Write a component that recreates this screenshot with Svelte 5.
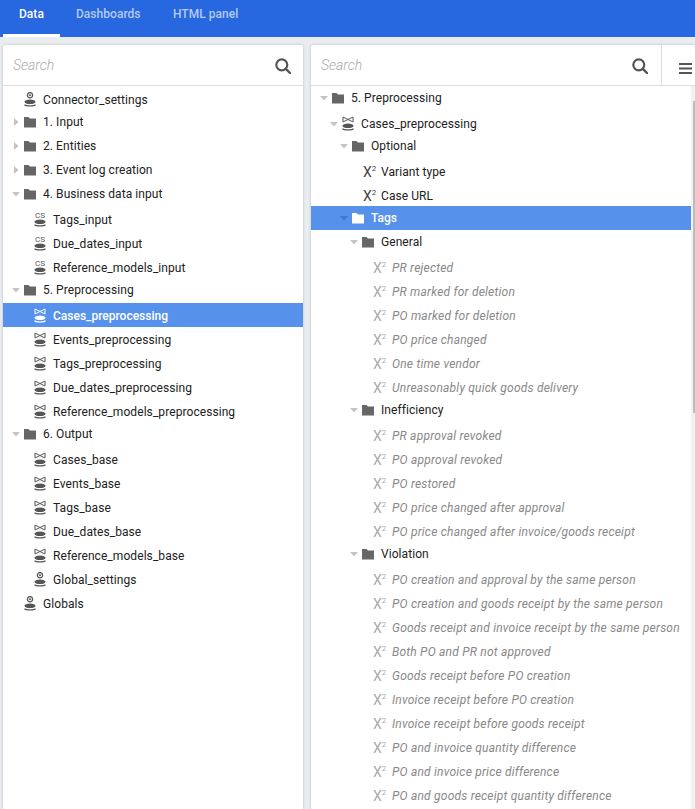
<script>
  const left = [
    { t: 'Connector_settings', k: 'gear', d: 0 },
    { t: '1. Input', k: 'folder', d: 0, a: 'r' },
    { t: '2. Entities', k: 'folder', d: 0, a: 'r' },
    { t: '3. Event log creation', k: 'folder', d: 0, a: 'r' },
    { t: '4. Business data input', k: 'folder', d: 0, a: 'd' },
    { t: 'Tags_input', k: 'cs', d: 1 },
    { t: 'Due_dates_input', k: 'cs', d: 1 },
    { t: 'Reference_models_input', k: 'cs', d: 1 },
    { t: '5. Preprocessing', k: 'folder', d: 0, a: 'd' },
    { t: 'Cases_preprocessing', k: 'join', d: 1, sel: true },
    { t: 'Events_preprocessing', k: 'join', d: 1 },
    { t: 'Tags_preprocessing', k: 'join', d: 1 },
    { t: 'Due_dates_preprocessing', k: 'join', d: 1 },
    { t: 'Reference_models_preprocessing', k: 'join', d: 1 },
    { t: '6. Output', k: 'folder', d: 0, a: 'd' },
    { t: 'Cases_base', k: 'join', d: 1 },
    { t: 'Events_base', k: 'join', d: 1 },
    { t: 'Tags_base', k: 'join', d: 1 },
    { t: 'Due_dates_base', k: 'join', d: 1 },
    { t: 'Reference_models_base', k: 'join', d: 1 },
    { t: 'Global_settings', k: 'gear', d: 1 },
    { t: 'Globals', k: 'gear', d: 0 }
  ];
  const leaf = (t) => ({ t, k: 'x', d: 4, off: true });
  const right = [
    { t: '5. Preprocessing', k: 'folder', d: 0, a: 'd' },
    { t: 'Cases_preprocessing', k: 'join', d: 1, a: 'd' },
    { t: 'Optional', k: 'folder', d: 2, a: 'd' },
    { t: 'Variant type', k: 'x', d: 3 },
    { t: 'Case URL', k: 'x', d: 3 },
    { t: 'Tags', k: 'folder', d: 2, a: 'd', sel: true },
    { t: 'General', k: 'folder', d: 3, a: 'd' },
    ...['PR rejected', 'PR marked for deletion', 'PO marked for deletion', 'PO price changed', 'One time vendor', 'Unreasonably quick goods delivery'].map(leaf),
    { t: 'Inefficiency', k: 'folder', d: 3, a: 'd' },
    ...['PR approval revoked', 'PO approval revoked', 'PO restored', 'PO price changed after approval', 'PO price changed after invoice/goods receipt'].map(leaf),
    { t: 'Violation', k: 'folder', d: 3, a: 'd' },
    ...['PO creation and approval by the same person', 'PO creation and goods receipt by the same person', 'Goods receipt and invoice receipt by the same person', 'Both PO and PR not approved', 'Goods receipt before PO creation', 'Invoice receipt before PO creation', 'Invoice receipt before goods receipt', 'PO and invoice quantity difference', 'PO and invoice price difference', 'PO and goods receipt quantity difference'].map(leaf)
  ];
</script>

{#snippet searchIcon()}
  <svg class="search-icon" viewBox="0 0 16 16" width="16" height="16" aria-hidden="true">
    <circle cx="6.800" cy="6.800" r="5.500" fill="none" stroke="currentColor" stroke-width="2.200" />
    <path d="M10.800 10.800 15 15" stroke="currentColor" stroke-width="2.400" stroke-linecap="round" />
  </svg>
{/snippet}

{#snippet tree(rows)}
  <ul class="tree">
    {#each rows as r}
      <li class="row d{r.d}" class:sel={r.sel} class:off={r.off} class:is-folder={r.k === 'folder'}>
        {#if r.a}
          <svg class="arrow" viewBox="0 0 8 8" width="8" height="8" aria-hidden="true">
            {#if r.a === 'r'}<path d="M2 0 6.500 4 2 8Z" />{:else}<path d="M0 2h8L4 6.500Z" />{/if}
          </svg>
        {:else}
          <span class="arrow"></span>
        {/if}
        {#if r.k === 'folder'}
          <svg class="ico" viewBox="0 0 12 12" width="12" height="12" aria-hidden="true">
            <path d="M0 1h4.500L6 2.500h6V11.500H0Z" fill="currentColor" />
          </svg>
        {:else if r.k === 'x'}
          <span class="xico">X<sup>2</sup></span>
        {:else}
          <svg class="ico db" viewBox="0 0 12 16" width="12" height="16" aria-hidden="true">
            {#if r.k === 'gear'}
              <circle cx="6" cy="3.200" r="2.600" fill="none" stroke="currentColor" stroke-width="1.300" />
              <circle cx="6" cy="3.200" r="1" fill="currentColor" />
            {:else if r.k === 'cs'}
              <text x="6" y="5.800" text-anchor="middle" class="cs">CS</text>
            {:else}
              <path d="M1 1v5L11 1v5Z" fill="none" stroke="currentColor" stroke-width="1" />
            {/if}
            <ellipse cx="6" cy="9.800" rx="5.500" ry="2.300" fill="currentColor" />
            <path d="M0.500 12.600c1 1.700 10 1.700 11 0" fill="none" stroke="currentColor" stroke-width="1.300" />
          </svg>
        {/if}
        <span class="label">{r.t}</span>
      </li>
    {/each}
  </ul>
{/snippet}

<div class="app">
  <nav class="tabs">
    <a class="tab active" href="#data">Data</a>
    <a class="tab" href="#dash">Dashboards</a>
    <a class="tab" href="#html">HTML panel</a>
  </nav>
  <main class="main">
    <section class="panel leftp">
      <div class="search">
        <span class="ph">Search</span>
        {@render searchIcon()}
      </div>
      {@render tree(left)}
    </section>
    <section class="panel rightp">
      <div class="search">
        <span class="ph">Search</span>
        {@render searchIcon()}
        <div class="menu">
          <svg viewBox="0 0 13 11" width="13" height="11" aria-hidden="true">
            <path d="M0 1h13M0 5.500h13M0 10h13" stroke="currentColor" stroke-width="2" />
          </svg>
        </div>
      </div>
      <div class="scroll">
        {@render tree(right)}
        <div class="bar"><div class="thumb"></div></div>
      </div>
    </section>
  </main>
</div>

<style>
  :global(body) { margin: 0; background: #e9edf0; overflow: hidden; }
  .app { width: 695px; height: 809px; overflow: hidden; display: flex; flex-direction: column; font-family: Roboto, "Liberation Sans", sans-serif; font-size: 12px; color: #212121; }
  .tabs { height: 37px; flex: none; background: #2767e0; display: flex; padding-left: 3px; box-sizing: border-box; }
  .tab { width: 57px; height: 37px; box-sizing: border-box; padding: 7px 0 0 16px; color: #b5cbf2; text-decoration: none; white-space: nowrap; font-weight: 500; line-height: 14px; letter-spacing: .03px; }
  .tab:nth-child(2) { width: 97px; }
  .tab.active { color: #fff; border-bottom: 3px solid #fff; }
  .main { flex: 1; display: flex; gap: 8px; padding: 8px 0 0 3px; min-height: 0; }
  .panel { flex: none; background: #fff; border-radius: 2px 2px 0 0; box-shadow: 0 0 3px rgba(0, 0, 0, .2); overflow: hidden; display: flex; flex-direction: column; }
  .leftp { width: 300px; }
  .rightp { width: 384px; }
  .search { height: 41px; flex: none; box-sizing: border-box; border-bottom: 1px solid #ddd; display: flex; align-items: center; padding: 0 12px 0 10px; color: #555; }
  .ph { flex: 1; font-style: italic; font-weight: 300; font-size: 14px; color: #aaa; }
  .search-icon { flex: none; margin-top: 1px; }
  .rightp .search { padding-right: 0; }
  .menu { flex: none; width: 34px; margin-left: 13px; height: 40px; border-left: 1px solid #ddd; box-sizing: border-box; display: flex; align-items: center; justify-content: flex-end; padding: 6px 3px 0 0; }
  .scroll { flex: 1; min-height: 0; display: flex; overflow: hidden; margin-top: -1px; }
  .scroll .tree { flex: 1; min-width: 0; margin-top: 1px; }
  .bar { width: 4px; flex: none; background: #f1f1f1; margin-top: 1px; }
  .thumb { width: 2px; height: 312px; margin: 15px 0 0 2px; background: #bdbdbd; }
  .tree { list-style: none; margin: 1px 0 0; padding: 0; letter-spacing: .07px; }
  .row { height: 24px; display: flex; align-items: center; box-sizing: border-box; color: #212121; white-space: nowrap; padding-top: 2px; }
  .rightp .row { padding-top: 4px; }
  .d0 { padding-left: 9px; }
  .d1 { padding-left: 19px; }
  .d2 { padding-left: 29px; }
  .d3 { padding-left: 39px; }
  .d4 { padding-left: 49px; }
  .arrow { width: 8px; height: 8px; flex: none; margin-right: 4px; fill: #c4c4c4; }
  .ico { flex: none; color: #666; }
  .db { color: #555; }
  .cs { font-size: 8px; font-family: Roboto, sans-serif; fill: currentColor; letter-spacing: 0; }
  .label { margin-left: 7px; }
  .is-folder .label, .is-folder .ico, .is-folder .arrow { position: relative; top: -2px; }
  .xico { width: 11px; margin-left: 1px; flex: none; font-size: 14px; font-weight: 400; line-height: 14px; color: #444; white-space: nowrap; letter-spacing: 0; }
  .xico sup { font-size: 8px; line-height: 0; vertical-align: 6px; margin-left: 0; }
  .off { color: #888; }
  .off .label { font-style: italic; letter-spacing: .21px; }
  .off .xico { width: 12px; color: #aaa; }
  .sel { background: #5691ec; color: #fff; font-weight: 500; letter-spacing: 0; }
  .sel .ico { color: #fff; }
  .sel .arrow { fill: #3f78d0; }
</style>
